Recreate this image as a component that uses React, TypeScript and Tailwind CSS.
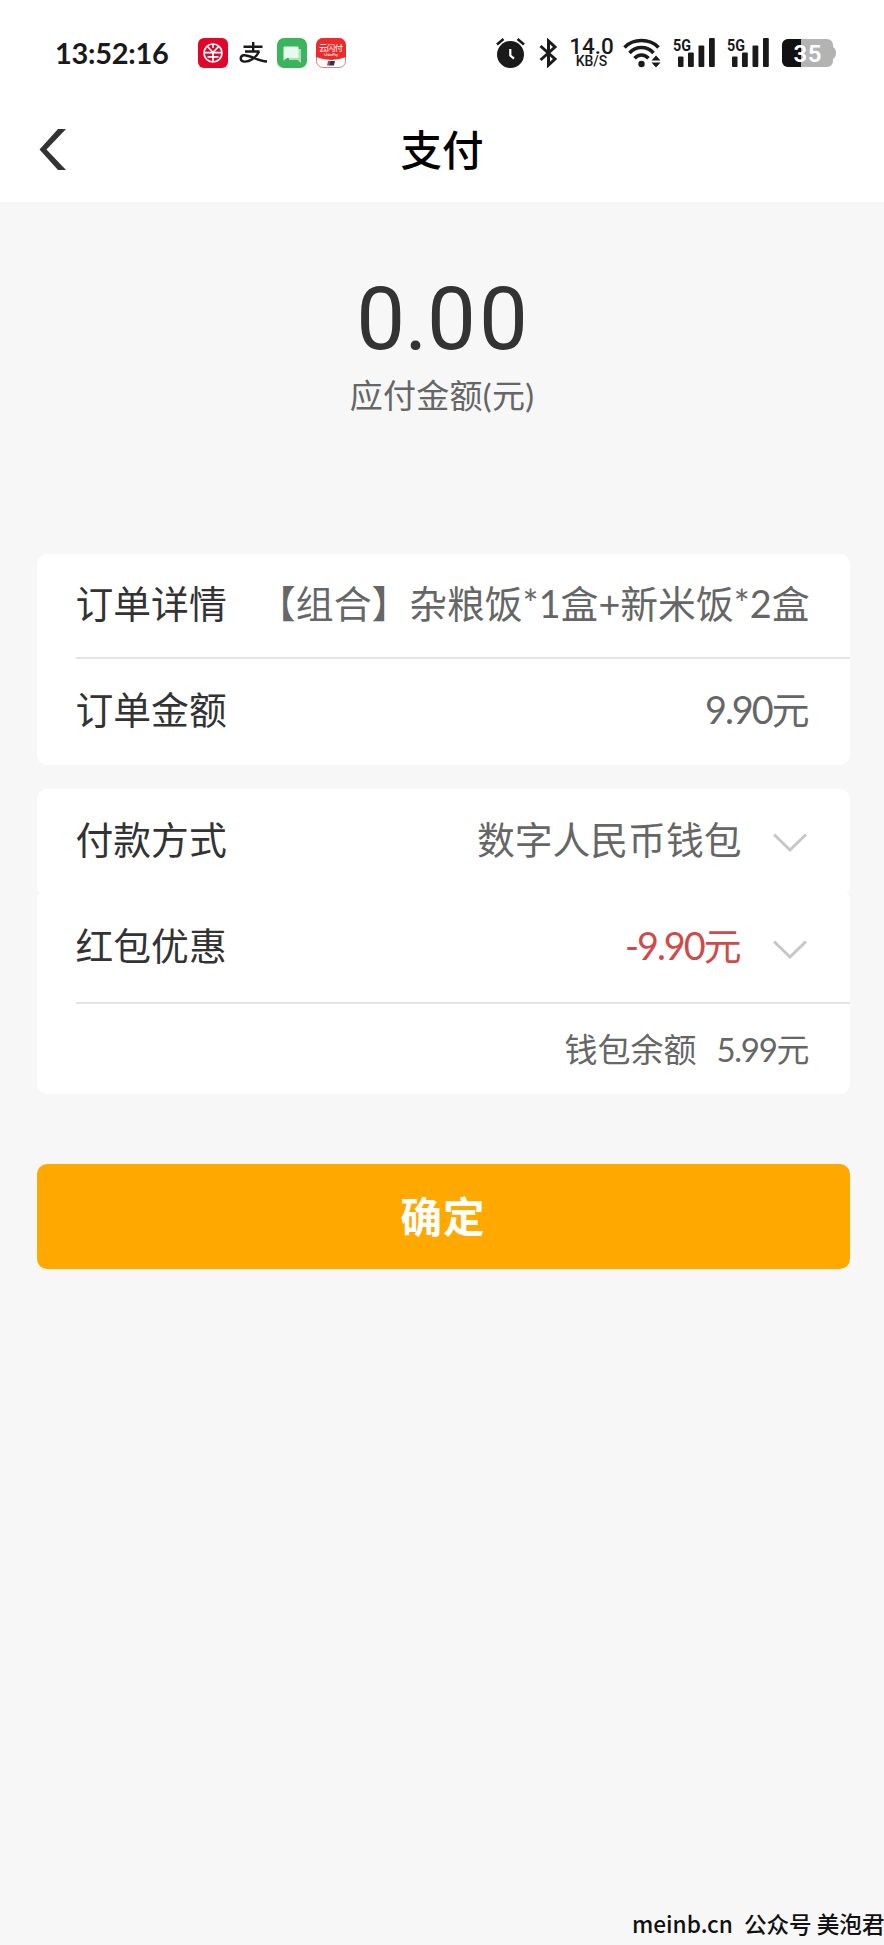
import clsx from "clsx";

/* ── Order data ────────────────────────────────────────── */
const orderRows = [
  { label: "订单详情", value: "【组合】杂粮饭*1盒+新米饭*2盒" },
  { label: "订单金额", amount: "9.90" },
];

/* ── Status bar icons ──────────────────────────────────── */
function YuanIcon() {
  return (
    <svg width="30" height="30" viewBox="0 0 30 30" fill="none">
      <rect width="30" height="30" rx="6" fill="#e2062b" />
      <g stroke="#fff" strokeWidth="1.7">
        <circle cx="15" cy="15" r="9" />
        <path d="M9.5 8.5 15 14.5 20.5 8.5M15 6v4M15 14v10M6.5 14.6h17M9.5 18.8h11" />
      </g>
    </svg>
  );
}

function AlipayIcon() {
  return (
    <svg width="29" height="22" viewBox="0 0 29 22" fill="none" stroke="#1a1a1a" strokeWidth="2.4">
      <path d="M4.5 4.8h19M14.2 0v9M6 9.5h14.5" />
      <path d="M20 9.5C17 16 10 20.5 4.5 19.5C.5 18.5 1 13.5 5 13.2C12 13 18 19 28 19.5" />
    </svg>
  );
}

function ChatIcon() {
  return (
    <svg width="30" height="30" viewBox="0 0 30 30">
      <rect width="30" height="30" rx="7" fill="#3bb55d" />
      <path d="M12 11h12v14l-3.5-3H12z" fill="#a9e2b7" />
      <path d="M7 8.5h13.500a1 1 0 0 1 1 1V19a1 1 0 0 1-1 1H10l-3.5 2.500V9.500z" fill="#e9f9ed" />
    </svg>
  );
}

function UnionPayIcon() {
  return (
    <svg width="30" height="30" viewBox="0 0 30 30">
      <rect x=".5" y=".5" width="29" height="29" rx="6.5" fill="#fff" stroke="#c98a8a" />
      <path d="M0 19V7a7 7 0 0 1 7-7h16a7 7 0 0 1 7 7v12Q15 25 0 19z" fill="#ee2b2b" />
      <text x="3" y="12.5" fontSize="8.5" textLength="24" fill="#fff" fontFamily="Noto Sans CJK SC, sans-serif">云闪付</text>
      <text x="8" y="17.5" fontSize="4" textLength="14" fill="#fff" fontFamily="Lato, sans-serif">UnionPay</text>
      <path d="M12 23h3l-1 4.5h-3z" fill="#d33" />
      <path d="M14.5 23h4.5l-1 4.5h-4.500z" fill="#153a5c" />
    </svg>
  );
}

function AlarmIcon() {
  return (
    <svg width="29" height="30" viewBox="0 0 29 30" fill="none">
      <circle cx="14.5" cy="16.5" r="13.5" fill="#1a1a1a" />
      <path d="M1 6.500 7.500 1M28 6.500 21.500 1" stroke="#1a1a1a" strokeWidth="2.6" />
      <path d="M14.3 11v6.5l3.7 3.2" stroke="#fff" strokeWidth="2.2" />
    </svg>
  );
}

function BluetoothIcon() {
  return (
    <svg width="19" height="30" viewBox="0 0 19 30" fill="none" stroke="#1a1a1a" strokeWidth="3">
      <path d="M1.5 8 16 21 9.500 27V3L16 9 1.500 22" />
    </svg>
  );
}

function WifiIcon() {
  return (
    <svg width="40" height="30" viewBox="0 0 40 30" fill="none" stroke="#1a1a1a" strokeWidth="3.5">
      <path d="M1.5 9.5C10 .2 27 .2 35.500 9.500" />
      <path d="M6.5 15C13 7.800 24 7.800 30.500 15" />
      <path d="M11.5 20.3C15.500 16 21.500 16 25.500 20.300" />
      <circle cx="18.5" cy="26" r="3.2" fill="#1a1a1a" stroke="none" />
      <path d="M28.5 22.500 33 17.500 37.500 22.500zM28.500 24.500 33 29.500 37.500 24.500z" fill="#1a1a1a" stroke="none" />
    </svg>
  );
}

function SignalIcon() {
  return (
    <svg className="overflow-visible" width="42" height="30" viewBox="0 0 42 30" fill="#1a1a1a">
      <text x="0" y="12.5" fontSize="16" fontWeight="700" textLength="18" lengthAdjust="spacingAndGlyphs" fontFamily="Roboto, sans-serif">5G</text>
      <rect x="5" y="18.5" width="5.5" height="10.5" rx="1" />
      <rect x="15" y="14.5" width="5.8" height="14.5" rx="1" />
      <rect x="25.5" y="7.5" width="5.8" height="21.5" rx="1" />
      <rect x="36" y="0" width="5.8" height="29" rx="1" />
    </svg>
  );
}

function BatteryIcon() {
  return (
    <svg width="54" height="28" viewBox="0 0 54 28">
      <rect x="0" y="0" width="51" height="28" rx="6" fill="#b3b3b3" />
      <path d="M51 8c2 1 3 3 3 6s-1 5-3 6z" fill="#b3b3b3" />
      <path d="M19 0H6a6 6 0 0 0-6 6v16a6 6 0 0 0 6 6h13z" fill="#111" />
      <text x="11.5" y="22.5" fontSize="24" fontWeight="600" textLength="28" fill="#fff" fontFamily="Roboto, sans-serif">35</text>
    </svg>
  );
}

function Chevron() {
  return (
    <svg className="ml-[31px] mr-[3px] mt-[8px] shrink-0" width="34" height="20" viewBox="0 0 34 20" fill="none" stroke="#c6c6c6" strokeWidth="3">
      <path d="M1 1.5 17 17 33 1.5" />
    </svg>
  );
}

/* ── Rows ──────────────────────────────────────────────── */
type RowProps = {
  label: string;
  value?: string;
  amount?: string;
  className?: string;
  red?: boolean;
  chevron?: boolean;
};

function Row({ label, value, amount, className, red, chevron }: RowProps) {
  return (
    <div className={clsx("flex items-center justify-between pb-[3px] pl-[39px] pr-10 text-[37.8px] leading-none whitespace-nowrap", className)}>
      <span className="text-[#333]">{label}</span>
      <span className={clsx("flex items-center", red ? "text-[#cf4a4a]" : "text-[#666]")}>
        {amount ? (
          <span>
            <span className="tracking-[-2px]">{amount}</span>元
          </span>
        ) : (
          <span>{value}</span>
        )}
        {chevron && <Chevron />}
      </span>
    </div>
  );
}

/* ── Page ──────────────────────────────────────────────── */
export default function App() {
  return (
    <main className="flex h-[1945px] w-[884px] flex-col overflow-hidden bg-[#f7f7f7] font-[Lato,'Noto_Sans_CJK_SC',sans-serif]">
      {/* Status bar */}
      <div className="flex h-[106px] shrink-0 items-center bg-white pl-[55px] text-[#1a1a1a]">
        <span className="w-[143px] pb-0.5 text-[29px] font-bold leading-none tracking-[-0.3px]">13:52:16</span>
        <div className="flex items-center">
          <YuanIcon />
          <span className="ml-[11px] mr-[9px]"><AlipayIcon /></span>
          <ChatIcon />
          <span className="ml-[9px]"><UnionPayIcon /></span>
        </div>
        <div className="ml-[150px] flex items-center">
          <AlarmIcon />
          <span className="ml-3.5"><BluetoothIcon /></span>
          <span className="ml-[11px] flex w-[45px] flex-col items-center font-[Roboto,sans-serif] font-medium">
            <span className="text-[22.5px] leading-[17px]">14.0</span>
            <span className="text-[14px] leading-[13px]">KB/S</span>
          </span>
          <span className="ml-[9px]"><WifiIcon /></span>
          <span className="ml-[10px]"><SignalIcon /></span>
          <span className="ml-3"><SignalIcon /></span>
          <span className="ml-[13px]"><BatteryIcon /></span>
        </div>
      </div>

      {/* Title bar */}
      <header className="grid h-24 shrink-0 grid-cols-[1fr_auto_1fr] items-start bg-white">
        <svg className="ml-[39px] mt-[23px]" width="28" height="42" viewBox="0 0 28 42" fill="#333">
          <path d="M19 0h8L7.500 20.500 27 41h-8L.5 20.500z" />
        </svg>
        <h1 className="mt-[24px] text-[41.5px] font-medium leading-none text-black">支付</h1>
      </header>

      {/* Amount due */}
      <section className="flex h-[352px] shrink-0 flex-col items-center">
        <p className="mt-[74px] pl-[3px] font-[Roboto,sans-serif] text-[87px] leading-[87px] tracking-[3px] text-[#333]">
          <span className="tracking-[-0.5px]">0.</span>00
        </p>
        <p className="mt-[16px] text-[33px] leading-none tracking-[0.3px] text-[#666]">应付金额(元)</p>
      </section>

      {/* Order */}
      <section className="ml-[36.5px] mr-[34.5px] h-[211px] shrink-0 rounded-[10px] bg-white">
        <Row {...orderRows[0]} className="h-[103px]" />
        <div className="ml-[39px] h-0.5 bg-[#e3e3e3]" />
        <Row {...orderRows[1]} className="h-[104px]" />
      </section>

      {/* Payment */}
      <section className="ml-[36.5px] mr-[34.5px] mt-6 shrink-0">
        <Row label="付款方式" value="数字人民币钱包" chevron className="h-[104px] rounded-t-[10px] rounded-b-[5px] bg-white" />
        <div className="rounded-t-[5px] rounded-b-[10px] bg-white">
          <Row label="红包优惠" amount="-9.90" red chevron className="h-[109px]" />
          <div className="ml-[39px] h-0.5 bg-[#e3e3e3]" />
          <div className="flex h-[90px] items-center justify-end gap-5 pr-10 text-[33px] leading-none text-[#666]">
            <span>钱包余额</span>
            <span>
              <span className="tracking-[-1.3px]">5.99</span>元
            </span>
          </div>
        </div>
      </section>

      <button className="ml-[36.5px] mr-[34.5px] mt-[70px] h-[105px] shrink-0 rounded-[10px] bg-[#ffa900] pt-[3px] text-[41.5px] font-bold leading-none tracking-[1px] text-white">
        确定
      </button>

      <footer className="mt-auto flex w-[252px] gap-[11px] self-end whitespace-nowrap pb-2 font-['Noto_Sans_CJK_SC',sans-serif] text-[22.6px] font-medium leading-[26px] text-[#111]">
        <span>meinb.cn</span>
        <span>公众号 美泡君</span>
      </footer>
    </main>
  );
}
